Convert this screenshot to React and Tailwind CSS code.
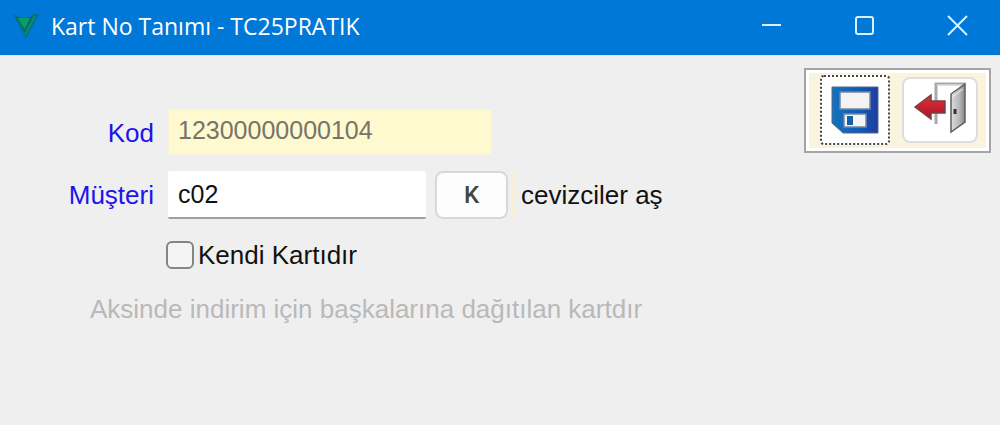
import { useState } from 'react';

const controls = [
  { label: 'Simge durumuna küçült', path: 'M1 10H20' },
  { label: 'Ekranı kapla', path: 'M4 2H17Q19 2 19 4V17Q19 19 17 19H4Q2 19 2 17V4Q2 2 4 2Z' },
  { label: 'Kapat', path: 'M1 1L20 20M20 1L1 20' },
];

function AppLogo() {
  return (
    <svg width="28" height="26" viewBox="0 0 28 26" aria-hidden="true">
      <path d="M1 1L7 4H18L22 1H27L14 25Z" fill="#086e78" />
      <path d="M6 5H18L13 17Z" fill="#08a060" />
      <path d="M23 3L13 22" stroke="#079069" strokeWidth="2" />
      <path d="M20 3L12 18" stroke="#075c83" strokeWidth="1" />
    </svg>
  );
}

function SaveIcon() {
  return (
    <svg width="48" height="48" viewBox="0 0 48 48" aria-hidden="true">
      <defs>
        <linearGradient id="disk" x1="0" x2="1">
          <stop offset="0" stopColor="#1573bd" />
          <stop offset="0.65" stopColor="#1158b5" />
          <stop offset="1" stopColor="#223ba0" />
        </linearGradient>
      </defs>
      <path d="M1 1H47V47H12L1 37Z" fill="url(#disk)" stroke="#51698d" strokeWidth="1" />
      <rect x="9" y="6" width="30" height="17" fill="#f3f3f4" stroke="#74879d" strokeWidth="1.5" />
      <rect x="13" y="28" width="22" height="13" fill="#f5f5f6" stroke="#74879d" strokeWidth="1.5" />
      <rect x="16" y="30" width="6" height="9" fill="#1260a8" />
    </svg>
  );
}

function ExitIcon() {
  return (
    <svg width="54" height="52" viewBox="0 0 54 52" aria-hidden="true">
      <defs>
        <linearGradient id="door" x1="0" x2="1">
          <stop offset="0" stopColor="#dedede" />
          <stop offset="0.6" stopColor="#b7b7b7" />
          <stop offset="1" stopColor="#858585" />
        </linearGradient>
        <linearGradient id="arrow" x1="0" y1="0" x2="0" y2="1">
          <stop offset="0" stopColor="#df3341" />
          <stop offset="1" stopColor="#ad1121" />
        </linearGradient>
      </defs>
      <path d="M23 42V2H52" fill="none" stroke="#a9a9a9" strokeWidth="3" />
      <path d="M24 3H50" stroke="#eeeeee" strokeWidth="1" />
      <path d="M38 12L52 2V40L38 50Z" fill="url(#door)" stroke="#5f5f5f" strokeWidth="1.5" />
      <path d="M39 15L50 7" stroke="#f0f0f0" strokeWidth="1" />
      <path d="M42 27V32" stroke="#333" strokeWidth="3" />
      <path d="M2 25L18 13V19H32V31H18V37Z" fill="url(#arrow)" stroke="#774047" strokeWidth="1.5" />
    </svg>
  );
}

export default function App() {
  const [customer, setCustomer] = useState('c02');
  const [ownCard, setOwnCard] = useState(false);

  return (
    <div className="min-h-screen bg-[#efefef] font-['Liberation_Sans',sans-serif] text-[26px] leading-8 text-[#111]">
      <header className="flex h-14 items-center border-b border-[#cfe9fa] bg-[#0078d7] pb-1 pl-3 text-white">
        <AppLogo />
        <h1 className="ml-[11px] flex-1 font-['Open_Sans',sans-serif] text-[23px]">Kart No Tanımı - TC25PRATIK</h1>
        <div className="-mr-1 flex h-full">
          {controls.map(({ label, path }) => (
            <button key={label} type="button" aria-label={label} className="flex w-[93px] items-center justify-center">
              <svg width="21" height="21" viewBox="0 0 21 21" fill="none" stroke="#d9f1ff" strokeWidth="2">
                <path d={path} />
              </svg>
            </button>
          ))}
        </div>
      </header>

      <main className="flex items-start justify-between pr-[9px]">
        <form className="pt-[53px]" onSubmit={(event) => event.preventDefault()}>
          <div className="grid grid-cols-[154px_auto] gap-x-[14px] gap-y-4">
            <label htmlFor="code" className="pt-2 text-right text-[#1c14ee]">Kod</label>
            <input
              id="code"
              readOnly
              value="12300000000104"
              className="h-[46px] w-[324px] border border-[#f4f1dc] bg-[#fff9cf] px-[9px] pb-1 text-[25px] text-[#77746a] outline-none"
            />

            <label htmlFor="customer" className="pt-2 text-right text-[#1c14ee]">Müşteri</label>
            <div className="flex h-12 items-center">
              <input
                id="customer"
                value={customer}
                onChange={(event) => setCustomer(event.target.value)}
                className="h-12 w-[258px] rounded-xs border-b-2 border-[#a0a0a0] bg-white px-[10px] text-[25px] outline-none"
              />
              <div className="ml-[9px] border-r-4 border-[#f8f0dc] pr-1">
                <button
                  type="button"
                  className="h-12 w-[73px] rounded-lg border-2 border-[#d8d8dc] bg-[#fdfdfd] font-['Roboto',sans-serif] text-2xl font-medium text-[#444]"
                >
                  K
                </button>
              </div>
              <output htmlFor="customer" className="ml-[5px]">cevizciler aş</output>
            </div>
          </div>

          <label className="mt-5 ml-[166px] flex items-center gap-1">
            <input
              type="checkbox"
              checked={ownCard}
              onChange={(event) => setOwnCard(event.target.checked)}
              className="size-7 appearance-none rounded-md border-2 border-[#858585] bg-[#f4f4f4] checked:bg-[#0078d7]"
            />
            Kendi Kartıdır
          </label>
          <p className="mt-[22px] ml-[90px] text-[#b9b9b9]">Aksinde indirim için başkalarına dağıtılan kartdır</p>
        </form>

        <div className="mt-3 border-2 border-[#a5a5a5] bg-white p-[3px]">
          <div className="flex items-center gap-3 bg-[#faf4df] pt-[2px] pr-2 pb-[3px] pl-[11px]">
            <button
              type="button"
              aria-label="Kaydet"
              className="flex h-[70px] w-[70px] items-center justify-center rounded-sm border-2 border-dotted border-[#444] bg-white"
            >
              <SaveIcon />
            </button>
            <button
              type="button"
              aria-label="Çıkış"
              className="flex h-[66px] w-[76px] items-center justify-center rounded-lg border-2 border-[#dedee2] bg-white pb-1"
            >
              <ExitIcon />
            </button>
          </div>
        </div>
      </main>
    </div>
  );
}
